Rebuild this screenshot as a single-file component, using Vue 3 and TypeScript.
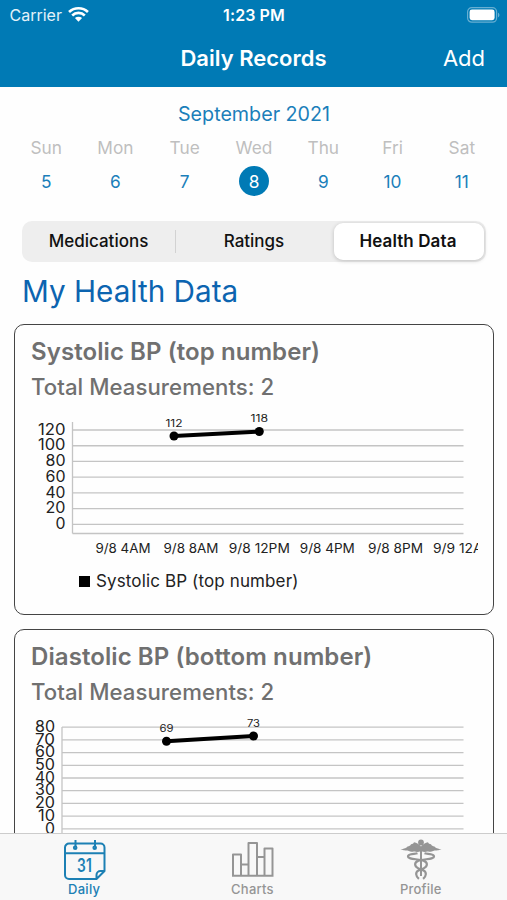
<script setup lang="ts">
import { ref } from 'vue'

interface Point { x: number; y: number; value: number; labelY: number; width: number }
interface Chart {
  name: string
  axisX: number
  axisTop: number
  firstLine: number
  step: number
  ticks: number[]
  baseline: number
  points: Point[]
}

const days = [
  { name: 'Sun', date: 5 },
  { name: 'Mon', date: 6 },
  { name: 'Tue', date: 7 },
  { name: 'Wed', date: 8 },
  { name: 'Thu', date: 9 },
  { name: 'Fri', date: 10 },
  { name: 'Sat', date: 11 },
]
const selectedDate = ref(8)

const segments = ['Medications', 'Ratings', 'Health Data']
const activeSegment = ref('Health Data')

const timeLabels = [
  { text: '9/8 4AM', x: 92, width: 55 },
  { text: '9/8 8AM', x: 160, width: 55 },
  { text: '9/8 12PM', x: 228.3, width: 61 },
  { text: '9/8 4PM', x: 296.3, width: 55 },
  { text: '9/8 8PM', x: 364.5, width: 55 },
  { text: '9/9 12AM', x: 433, width: 62 },
]

const charts: Chart[] = [
  {
    name: 'Systolic BP (top number)',
    axisX: 41.5,
    axisTop: 17,
    firstLine: 25,
    step: 15.73,
    ticks: [120, 100, 80, 60, 40, 20, 0],
    baseline: 128.5,
    points: [
      { x: 143, y: 31, value: 112, labelY: 21.5, width: 17 },
      { x: 228.3, y: 26.5, value: 118, labelY: 17, width: 17.5 },
    ],
  },
  {
    name: 'Diastolic BP (bottom number)',
    axisX: 31,
    axisTop: 17,
    firstLine: 17.2,
    step: 12.7,
    ticks: [80, 70, 60, 50, 40, 30, 20, 10, 0],
    baseline: 128.5,
    points: [
      { x: 135.5, y: 31.2, value: 69, labelY: 22, width: 14 },
      { x: 222.5, y: 26, value: 73, labelY: 17, width: 13 },
    ],
  },
]

const tickWidth = (tick: number) => (tick >= 100 ? 27.5 : tick === 10 ? 17 : tick > 10 ? 20 : 10)
</script>

<template>
  <div class="screen">
    <header class="header">
      <div class="status">
        <div class="carrier">
          <span>Carrier</span>
          <svg class="wifi" viewBox="0 0 20 15">
            <path d="M1 5.6a13 13 0 0 1 18 0" />
            <path d="M4 8.9a8.6 8.6 0 0 1 12 0" />
            <path class="wifi-dot" d="M6.6 11.4a5 5 0 0 1 6.8 0L10 14.8z" />
          </svg>
        </div>
        <span class="clock">1:23 PM</span>
        <svg class="battery" viewBox="0 0 33 16">
          <rect class="battery-case" x=".6" y=".6" width="29" height="14.6" rx="4.2" />
          <rect class="battery-fill" x="2.6" y="2.6" width="25" height="10.6" rx="2.4" />
          <path class="battery-tip" d="M31 5.7c1.9.7 1.9 3.8 0 4.5z" />
        </svg>
      </div>
      <div class="nav">
        <h1 class="nav-title">Daily Records</h1>
        <button class="add">Add</button>
      </div>
    </header>

    <main class="content">
      <section class="calendar">
        <div class="month">September 2021</div>
        <div class="week">
          <button v-for="day in days" :key="day.date" class="day" @click="selectedDate = day.date">
            <span class="day-name">{{ day.name }}</span>
            <span class="day-date" :class="{ selected: day.date === selectedDate }">{{ day.date }}</span>
          </button>
        </div>
      </section>

      <div class="segments">
        <button
          v-for="segment in segments"
          :key="segment"
          class="segment"
          :class="{ active: segment === activeSegment }"
          @click="activeSegment = segment"
        >{{ segment }}</button>
      </div>

      <h2 class="heading">My Health Data</h2>

      <section v-for="chart in charts" :key="chart.name" class="card">
        <h3 class="card-title">{{ chart.name }}</h3>
        <p class="card-total">Total Measurements: {{ chart.points.length }}</p>
        <svg class="chart" width="447" height="155" viewBox="0 0 447 155">
          <g class="grid">
            <line
              v-for="(tick, i) in chart.ticks"
              :key="tick"
              :x1="chart.axisX"
              x2="432.5"
              :y1="chart.firstLine + i * chart.step"
              :y2="chart.firstLine + i * chart.step"
            />
            <line :x1="chart.axisX" x2="432.5" :y1="chart.baseline" :y2="chart.baseline" />
            <line :x1="chart.axisX" :x2="chart.axisX" :y1="chart.axisTop" :y2="chart.baseline" />
          </g>
          <text
            v-for="(tick, i) in chart.ticks"
            :key="tick"
            class="tick"
            :x="chart.axisX - 7"
            :y="chart.firstLine + i * chart.step + 4.7"
            :textLength="tickWidth(tick)"
            lengthAdjust="spacingAndGlyphs"
          >{{ tick }}</text>
          <text
            v-for="label in timeLabels"
            :key="label.text"
            class="time"
            :x="label.x"
            y="147.6"
            :textLength="label.width"
            lengthAdjust="spacingAndGlyphs"
          >{{ label.text }}</text>
          <line
            class="trend"
            :x1="chart.points[0].x"
            :y1="chart.points[0].y"
            :x2="chart.points[1].x"
            :y2="chart.points[1].y"
          />
          <g v-for="point in chart.points" :key="point.value">
            <circle :cx="point.x" :cy="point.y" r="4.5" />
            <text
              class="value"
              :x="point.x"
              :y="point.labelY"
              :textLength="point.width"
              lengthAdjust="spacingAndGlyphs"
            >{{ point.value }}</text>
          </g>
        </svg>
        <div class="legend"><i class="swatch"></i><span>{{ chart.name }}</span></div>
      </section>
    </main>

    <nav class="tabs">
      <a class="tab current">
        <svg class="icon" viewBox="0 0 44 42">
          <path d="M34.5 40H7a4 4 0 0 1-4-4V8.500a4 4 0 0 1 4-4h31.500a4 4 0 0 1 4 4V32zM3 14.200h39.500M34.500 40v-4a4 4 0 0 1 4-4h4" />
          <path d="M13.500 1v7.500M33 1v7.500" />
          <circle cx="13.200" cy="8.800" r="1.300" />
          <circle cx="32.700" cy="8.800" r="1.300" />
          <text class="icon-date" x="22.500" y="33" textLength="15" lengthAdjust="spacingAndGlyphs">31</text>
        </svg>
        <span>Daily</span>
      </a>
      <a class="tab">
        <svg class="icon" viewBox="0 0 44 42">
          <path d="M3 36.600V15.500h8v21.100M18.500 36.600V4H27v32.600M34.500 36.600V9.500h8v27.100M2 36.800h41.500M11 25.500h7.500M27 18h7.500" />
        </svg>
        <span>Charts</span>
      </a>
      <a class="tab">
        <svg class="icon" viewBox="0 0 44 42">
          <circle class="solid" cx="22" cy="3.500" r="2.900" />
          <path class="solid" d="M22 7.500c-1.500-2.300-4.500-3.800-7-4.300-.7 1.500-1.500 1.800-3 2-.7 1.500-1.700 2-3.500 2.300-.8 1.200-1.800 1.700-3.500 1.900-1 .7-2.200 1-3.500 1.100 2.500.9 4.500 1 7 1 2.500 1.200 4.800 1.400 7.200 1.100 1.700.6 4.300.5 6.300-.6 2 1.100 4.600 1.200 6.300.6 2.400.3 4.700.1 7.200-1.100 2.500 0 4.500-.1 7-1-1.300-.1-2.500-.4-3.500-1.100-1.700-.2-2.700-.7-3.500-1.900-1.800-.3-2.800-.8-3.500-2.300-1.500-.2-2.300-.5-3-2-2.500.5-5.500 2-7 4.300z" />
          <path d="M22 10v27" />
          <path class="snake" d="M18.500 14.200c-2.500 1-9.500.2-9.500 3.100 0 3.400 9.500 2.300 15.500 4.300 4.500 1.600 4.500 5.800 0 7.800l-5 2.100c-3.300 1.600-3 5.500.4 8.300M25.500 14.200c2.500 1 9.500.2 9.500 3.100 0 3.400-9.500 2.300-15.500 4.300-4.500 1.600-4.500 5.800 0 7.800l5 2.100c3.300 1.600 3 5.500-.4 8.300" />
        </svg>
        <span>Profile</span>
      </a>
    </nav>
  </div>
</template>

<style>
body { background: #fff; overflow: hidden; }
</style>

<style scoped>
* { box-sizing: border-box; }
.screen { width: 507px; height: 900px; display: flex; flex-direction: column; overflow: hidden; background: #fefefe; font-family: Inter, "Liberation Sans", sans-serif; }
button { border: 0; background: none; padding: 0; font: inherit; color: inherit; }
h1, h2, h3, p { margin: 0; }
.header { flex: none; height: 87px; background: #007ab5; color: #fff; }
.status { height: 30px; padding: 0 8px 0 10px; display: grid; grid-template-columns: 1fr auto 1fr; align-items: center; font-size: 16px; line-height: 30px; }
.carrier { display: flex; align-items: center; gap: 6px; color: #e3f2f9; margin-left: -.5px; }
.wifi { width: 21px; height: 16px; margin-top: -2px; fill: none; stroke: #fff; stroke-width: 2.5; }
.wifi-dot { fill: #fff; stroke: none; }
.clock { font-weight: 600; letter-spacing: .1px; margin-right: 1px; }
.battery { width: 33px; height: 16px; justify-self: end; margin-right: -1px; margin-top: -1px; }
.battery-case { fill: none; stroke: #67afd2; stroke-width: 1.2; }
.battery-fill { fill: #fff; }
.battery-tip { fill: #67afd2; }
.nav { height: 55px; padding: 0 22px; display: grid; grid-template-columns: 1fr auto 1fr; align-items: center; }
.nav-title { grid-column: 2; font-size: 22px; font-weight: 600; }
.add { justify-self: end; font-size: 22px; }
.content { flex: 1; min-height: 0; overflow: hidden; }
.calendar { height: 134px; padding: 15px 10.500px 0 11.500px; color: #1b7fba; }
.month { height: 24px; line-height: 24px; text-align: center; font-size: 19.700px; }
.week { display: grid; grid-template-columns: repeat(7, 1fr); }
.day { display: flex; flex-direction: column; align-items: center; }
.day-name { height: 40px; line-height: 44px; color: #bfbfbf; font-size: 17.300px; }
.day-date { width: 30px; height: 30px; line-height: 31px; border-radius: 50%; font-size: 17.300px; }
.day-date.selected { background: #007ab5; color: #fff; }
.segments { height: 41px; margin: 0 21px 0 22px; padding: 2px; border-radius: 10px; background: #eee; display: grid; grid-template-columns: 152px 1fr 150px; align-items: center; }
.segment { height: 37px; padding: 0 2px 1px 0; font-size: 17px; font-weight: 500; color: #111; border-radius: 9px; }
.segment:first-child { height: 23px; border-right: 1px solid #d2d2d2; border-radius: 0; }
.segment.active { background: #fff; box-shadow: 0 1px 4px rgba(0, 0, 0, .2); font-weight: 600; letter-spacing: .1px; }
.heading { height: 62px; padding-left: 22px; line-height: 58px; font-size: 29.700px; font-weight: 400; color: #0c64b0; }
.card { height: 291px; margin: 0 13px 14px 14px; border: 1.500px solid #444; border-radius: 10px; padding: 12px 14px 0 16px; color: #707070; }
.card-title { height: 30px; line-height: 30px; font-size: 24px; font-weight: 600; letter-spacing: .08px; }
.card-total { height: 38px; line-height: 40px; font-size: 22.200px; font-weight: 500; letter-spacing: .05px; }
.chart { display: block; overflow: hidden; fill: #000; }
.grid { stroke: #c4c4c4; stroke-width: 1.300; }
.tick { font-size: 15.600px; text-anchor: end; fill: #222; }
.time { font-size: 12.800px; text-anchor: middle; fill: #222; }
.value { font-size: 10.300px; text-anchor: middle; fill: #222; }
.trend { stroke: #000; stroke-width: 4; }
.legend { display: flex; align-items: center; gap: 6px; height: 24px; margin: 9px 0 0 48px; font-size: 17px; letter-spacing: .13px; color: #222; }
.swatch { width: 11px; height: 11px; background: #000; }
.tabs { flex: none; height: 67px; padding-right: 2px; border-top: 1px solid #ccc; background: #f8f8f8; display: grid; grid-template-columns: repeat(3, 1fr); }
.tab { display: flex; flex-direction: column; align-items: center; padding-top: 5px; color: #959595; font-size: 13px; font-weight: 500; line-height: 17px; letter-spacing: .25px; }
.tab.current { color: #1c80b4; }
.icon { width: 44px; height: 42px; fill: none; stroke: currentColor; stroke-width: 2; stroke-linejoin: round; }
.icon-date { font-size: 18px; font-weight: 600; text-anchor: middle; fill: currentColor; stroke: none; }
.solid { fill: currentColor; stroke: none; }
.snake { stroke-width: 2.200; }
</style>
